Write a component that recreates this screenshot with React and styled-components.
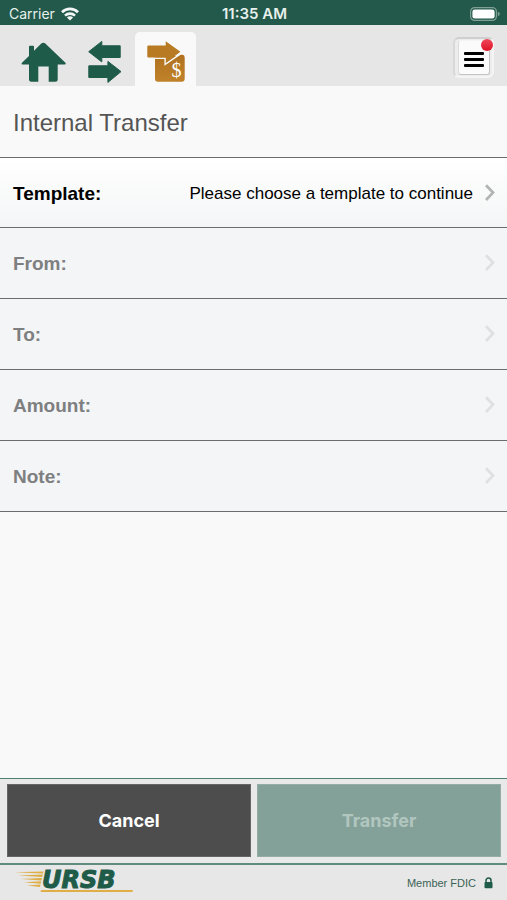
import React from "react";
import styled, { createGlobalStyle } from "styled-components";

const green = "#23594a";
const iconGreen = "#1f5b49";
const gold = "#b87a22";

const FIELDS = [
  { label: "Template:", value: "Please choose a template to continue", active: true },
  { label: "From:" },
  { label: "To:" },
  { label: "Amount:" },
  { label: "Note:" },
];

const GlobalStyle = createGlobalStyle`
  * {
    box-sizing: border-box;
  }

  body {
    margin: 0;
    background: #f9f9f9;
    font-family: "Liberation Sans", Arial, sans-serif;
  }

  button {
    font-family: inherit;
  }
`;

const Screen = styled.div`
  min-height: 100vh;
  display: flex;
  flex-direction: column;
`;

const StatusBar = styled.div`
  height: 25px;
  padding: 2px 7px 0 9px;
  display: grid;
  grid-template-columns: 1fr auto 1fr;
  align-items: center;
  background: ${green};
  color: #e6f0ec;
  font-family: Inter, sans-serif;
  font-size: 14px;
  line-height: 16px;

  .carrier {
    display: flex;
    align-items: center;
    gap: 6px;
  }

  .time {
    font-size: 15px;
    font-weight: 600;
  }

  .battery {
    display: flex;
    justify-content: flex-end;
  }
`;

const Toolbar = styled.header`
  height: 61px;
  padding: 4px 13px 0;
  display: flex;
  justify-content: space-between;
  align-items: center;
  background: #e6e6e6;
`;

const Tabs = styled.nav`
  display: flex;
  align-self: flex-end;
`;

const Tab = styled.button`
  width: 61px;
  height: 54px;
  padding: 0;
  border: 0;
  border-radius: 5px 5px 0 0;
  background: ${(props) => (props.$active ? "#f9f9f9" : "transparent")};

  svg {
    display: block;
  }
`;

const MenuButton = styled.button`
  position: relative;
  width: 41px;
  height: 41px;
  padding: 0;
  display: flex;
  justify-content: center;
  align-items: center;
  border: 2px solid #f4f4f4;
  border-top-color: #cfcfcf;
  border-left-color: #d8d8d8;
  border-radius: 6px;
  background: #ededed;

  .face {
    width: 32px;
    height: 35px;
    padding: 4px 5px 0;
    display: flex;
    flex-direction: column;
    justify-content: center;
    gap: 3px;
    border: 1px solid #c4c4c4;
    border-top-color: #f4f4f4;
    border-left-color: #dcdcdc;
    border-radius: 3px;
    background: #fbfbfb;
  }

  .bar {
    height: 3px;
    border-radius: 1px;
    background: #000;
  }

  .badge {
    position: absolute;
    top: 0;
    right: -1px;
    width: 12px;
    height: 12px;
    border-radius: 50%;
    background: linear-gradient(#f0485a, #dc1426);
  }
`;

const Title = styled.h1`
  height: 72px;
  margin: 0;
  padding: 2px 13px 0;
  display: flex;
  align-items: center;
  border-bottom: 1px solid #6a6d6e;
  color: #555;
  font-size: 24px;
  font-weight: 400;
  line-height: 28px;
`;

const Main = styled.main`
  flex: 1;
`;

const FieldRow = styled.button`
  width: 100%;
  height: ${(props) => (props.$active ? "70px" : "71px")};
  padding: 0 12px 0 13px;
  display: flex;
  align-items: center;
  gap: 12px;
  border: 0;
  border-bottom: 1px solid #6a6d6e;
  background: ${(props) =>
    props.$active ? "linear-gradient(#ffffff, #f4f5f6)" : "#f4f5f7"};
  color: ${(props) => (props.$active ? "#000" : "#7e7f80")};
  text-align: left;

  .label,
  .value {
    padding-top: 2px;
    line-height: 24px;
  }

  .label {
    flex: 1;
    font-size: 19px;
    font-weight: 700;
  }

  .value {
    font-size: 17px;
  }

  .chevron {
    color: ${(props) => (props.$active ? "#b4b4b4" : "#dfe0e1")};
  }
`;

const Actions = styled.div`
  padding: 5px 6px 6px 7px;
  display: flex;
  gap: 6px;
  border-top: 1px solid #4d8070;
  background: #e8e9e8;
`;

const ActionButton = styled.button`
  flex: 1;
  height: 73px;
  padding: 0;
  border: 1px solid ${(props) => (props.$primary ? "#94aea6" : "#666")};
  background: ${(props) => (props.$primary ? "#84a199" : "#4d4d4d")};
  color: ${(props) => (props.$primary ? "#b2c6c0" : "#fff")};
  font-family: Inter, sans-serif;
  font-size: 18px;
  font-weight: 700;
  line-height: 24px;
`;

const Footer = styled.footer`
  height: 37px;
  padding: 0 14px;
  display: flex;
  justify-content: space-between;
  align-items: center;
  border-top: 2px solid #5f8c7e;
  background: #e7e7e7;

  .member {
    display: flex;
    align-items: center;
    gap: 8px;
    color: #3b6355;
    font-size: 11px;
    line-height: 14px;
  }
`;

const WifiIcon = () => (
  <svg width="18" height="14" viewBox="0 0 18 14" fill="none" stroke="#f2f7f5" strokeWidth="2.6">
    <path d="M1 5.2a11.4 11.4 0 0 1 16 0" />
    <path d="M4 8.6a7.2 7.2 0 0 1 10 0" />
    <path d="M9 13.6 5.9 10.5a4.4 4.4 0 0 1 6.2 0z" fill="#f2f7f5" stroke="none" />
  </svg>
);

const BatteryIcon = () => (
  <svg width="30" height="14" viewBox="0 0 30 14">
    <rect x=".6" y=".6" width="25.8" height="12.8" rx="4" fill="none" stroke="#7fa095" strokeWidth="1.2" />
    <rect x="2.4" y="2.4" width="22.2" height="9.2" rx="2.4" fill="#fff" />
    <path d="M27.8 4.8q2 .6 2 2.2t-2 2.2z" fill="#7fa095" />
  </svg>
);

const HomeIcon = () => (
  <svg width="61" height="54" viewBox="0 0 61 54">
    <path
      d="M28.3 11.5q2-1.6 4 0L52.7 31q.4 1.6-1.2 1.6h-6.8v14.6q0 2.5-2.5 2.5h-6.5V34.5H25.3v15.2h-6.8q-2.5 0-2.5-2.5V32.6H9.6q-1.6 0-.9-1.6L16 24.1V14.5q0-.8.8-.8H20q1 0 1 .8v4.2z"
      fill={iconGreen}
    />
  </svg>
);

const SwapIcon = () => (
  <svg width="61" height="54" viewBox="0 0 61 54" fill={iconGreen} stroke={iconGreen} strokeWidth="1" strokeLinejoin="round">
    <path d="M14.7 19.7 27.8 9.4v4.4h18.4v11.7H27.8v4.4z" />
    <path d="M47 39.6 33.9 29.4v4.4H14.8v11.7h19.1v4.9z" />
  </svg>
);

const TransferIcon = () => (
  <svg width="61" height="54" viewBox="0 0 61 54">
    <defs>
      <linearGradient id="gold" x1="0" y1="0" x2="0" y2="1">
        <stop offset="0" stopColor="#b07120" />
        <stop offset="1" stopColor="#c08229" />
      </linearGradient>
    </defs>
    <path d="M20 24H42.6l2.6-1.2h2.3q2.2.3 2.2 2.8v21.2q0 2.9-2.9 2.9H22.9q-2.9 0-2.9-2.9z" fill="url(#gold)" />
    <path d="M19 26.2h11.1v6.2L47 20.8" fill="none" stroke="#f9f9f9" strokeWidth="1.4" />
    <path d="M12.3 14.5q0-1 1-1h17.4V9.2L45.4 19.8 31 30.8v-5.2H13.3q-1 0-1-1z" fill={gold} />
    <text x="41.6" y="45" textAnchor="middle" fontFamily="Liberation Serif, serif" fontSize="20" fill="#fff">
      $
    </text>
  </svg>
);

const Chevron = () => (
  <svg className="chevron" width="10" height="18" viewBox="0 0 10 18" fill="none" stroke="currentColor" strokeWidth="2.8">
    <path d="M1 1.2 8 8.6 1 16" />
  </svg>
);

const Logo = () => (
  <svg width="124" height="35" viewBox="0 0 124 35" role="img" aria-label="URSB">
    <g fill="#dfae47">
      <path d="M0 7.2 29.5 6.4l-.5 2.2z" />
      <path d="M4 10.6 28.7 9.6l-.5 2.4z" />
      <path d="M7 13.9 27.9 12.9l-.4 2.5z" />
      <path d="M10 17.2 27.1 16.2l-.4 2.5z" />
      <path d="M13 20.5 26.5 19.5l-.4 2.4z" />
      <path d="M27 25h92l-.6 2H26.6z" />
    </g>
    <text
      x="28"
      y="23"
      fontFamily="DejaVu Sans, sans-serif"
      fontSize="24"
      fontWeight="700"
      fontStyle="italic"
      fill={iconGreen}
      stroke={iconGreen}
      strokeWidth="1"
    >
      URSB
    </text>
  </svg>
);

const LockIcon = () => (
  <svg width="9" height="12" viewBox="0 0 9 12">
    <path d="M2 6V3.6a2.5 2.5 0 0 1 5 0V6" fill="none" stroke={iconGreen} strokeWidth="1.5" />
    <rect x=".5" y="5" width="8" height="6.2" rx="1" fill={iconGreen} />
  </svg>
);

function App() {
  return (
    <Screen>
      <GlobalStyle />
      <StatusBar>
        <div className="carrier">
          Carrier
          <WifiIcon />
        </div>
        <div className="time">11:35 AM</div>
        <div className="battery">
          <BatteryIcon />
        </div>
      </StatusBar>

      <Toolbar>
        <Tabs>
          <Tab aria-label="Home">
            <HomeIcon />
          </Tab>
          <Tab aria-label="Transfers">
            <SwapIcon />
          </Tab>
          <Tab $active aria-label="Internal transfer">
            <TransferIcon />
          </Tab>
        </Tabs>
        <MenuButton aria-label="Menu">
          <span className="face">
            <span className="bar" />
            <span className="bar" />
            <span className="bar" />
          </span>
          <span className="badge" />
        </MenuButton>
      </Toolbar>

      <Main>
        <Title>Internal Transfer</Title>
        {FIELDS.map((field) => (
          <FieldRow key={field.label} $active={field.active} disabled={!field.active}>
            <span className="label">{field.label}</span>
            {field.value && <span className="value">{field.value}</span>}
            <Chevron />
          </FieldRow>
        ))}
      </Main>

      <Actions>
        <ActionButton>Cancel</ActionButton>
        <ActionButton $primary disabled>
          Transfer
        </ActionButton>
      </Actions>

      <Footer>
        <Logo />
        <div className="member">
          Member FDIC
          <LockIcon />
        </div>
      </Footer>
    </Screen>
  );
}

export default App;
